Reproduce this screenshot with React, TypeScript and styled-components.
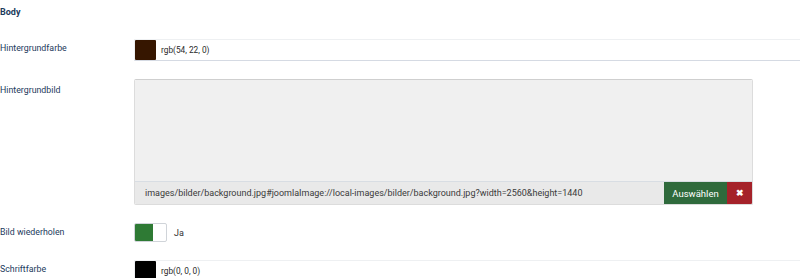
import styled, { createGlobalStyle } from "styled-components";

const GlobalStyle = createGlobalStyle`
    html, body {
        margin: 0;
        padding: 0;
        background: #fff;
        overflow: hidden;
    }
    body {
        font-family: Roboto, "Liberation Sans", Arial, sans-serif;
        color: #22262a;
    }
`;

const App = () => {
    return (
        <>
            <GlobalStyle />
            <Page>
                <Heading>Body</Heading>

                <Row>
                    <Label>Hintergrundfarbe</Label>
                    <ColorInput>
                        <Swatch color="rgb(54, 22, 0)" />
                        <ColorValue>rgb(54, 22, 0)</ColorValue>
                    </ColorInput>
                </Row>

                <Row>
                    <Label top>Hintergrundbild</Label>
                    <MediaField>
                        <Preview />
                        <UrlBar>
                            <UrlText>images/bilder/background.jpg#joomlaImage://local-images/bilder/background.jpg?width=2560&amp;height=1440</UrlText>
                            <SelectButton>Auswählen</SelectButton>
                            <ClearButton>✖</ClearButton>
                        </UrlBar>
                    </MediaField>
                </Row>

                <Row>
                    <Label>Bild wiederholen</Label>
                    <SwitchWrap>
                        <Switch>
                            <SwitchOn />
                        </Switch>
                        <SwitchText>Ja</SwitchText>
                    </SwitchWrap>
                </Row>

                <Row>
                    <Label>Schriftfarbe</Label>
                    <ColorInput>
                        <Swatch color="rgb(0, 0, 0)" />
                        <ColorValue>rgb(0, 0, 0)</ColorValue>
                    </ColorInput>
                </Row>
            </Page>
        </>
    );
};

// layout
const Page = styled.div`
    width: 800px;
    height: 278px;
    overflow: hidden;
    display: flex;
    flex-direction: column;
    gap: 18px;
`;

const Heading = styled.div`
    padding-top: 6px;
    font-size: 9px;
    line-height: 12px;
    font-weight: 700;
    color: #1c3a5c;
    margin-bottom: 3px;
`;

const Row = styled.div`
    display: flex;
    align-items: flex-start;
`;

const Label = styled.div<{ top?: boolean }>`
    width: 134px;
    flex-shrink: 0;
    padding-top: ${(p) => (p.top ? '5px' : '3px')};
    font-size: 8.8px;
    line-height: 13px;
    color: #1c3a5c;
`;

// colour picker
const ColorInput = styled.div`
    flex: 1;
    margin-right: -40px;
    height: 20px;
    display: flex;
    align-items: center;
    gap: 5px;
    border: 1px solid #eef0f2;
    border-bottom-color: #d5dae3;
    background: #fff;
`;

const Swatch = styled.div<{ color: string }>`
    width: 21px;
    height: 20px;
    background: ${(p) => p.color};
    border-radius: 1px;
`;

const ColorValue = styled.span`
    font-size: 8.3px;
    color: #2a2a2a;
`;

// media field
const MediaField = styled.div`
    width: 617px;
    display: flex;
    flex-direction: column;
    border-radius: 2px;
    overflow: hidden;
    border: 1px solid #dcdcdc;
    border-top-color: #cfcfcf;
`;

const Preview = styled.div`
    height: 101px;
    background: #f0f0f0;
`;

const UrlBar = styled.div`
    height: 22px;
    display: flex;
    align-items: stretch;
    background: #e9e9e9;
    border-top: 1px solid #d8dde3;
`;

const UrlText = styled.div`
    flex: 1;
    display: flex;
    align-items: center;
    padding-left: 10px;
    font-size: 9px;
    color: #3a3a3a;
    white-space: nowrap;
    overflow: hidden;
`;

const SelectButton = styled.div`
    width: 63px;
    display: flex;
    align-items: center;
    justify-content: center;
    background: #2f6a3c;
    color: #fff;
    font-size: 9.5px;
`;

const ClearButton = styled.div`
    width: 25px;
    display: flex;
    align-items: center;
    justify-content: center;
    background: #a5222a;
    color: #fff;
    font-size: 9px;
    font-weight: 700;
`;

// switch
const SwitchWrap = styled.div`
    display: flex;
    align-items: center;
    gap: 7px;
    height: 19px;
`;

const Switch = styled.div`
    width: 31px;
    height: 17px;
    border: 1px solid #d0d4d9;
    border-radius: 2px;
    background: #fff;
    display: flex;
    overflow: hidden;
`;

const SwitchOn = styled.div`
    width: 18px;
    height: 100%;
    background: #2e7a34;
`;

const SwitchText = styled.span`
    font-size: 9px;
    color: #333;
`;

export default App;
